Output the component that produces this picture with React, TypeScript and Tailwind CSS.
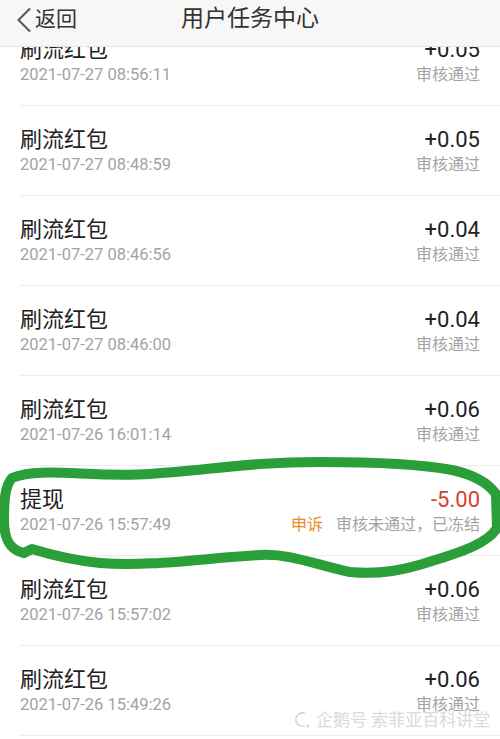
import React from 'react';

interface TaskRecord {
    title: string;
    time: string;
    amount: string;
    status: string;
    rejected?: boolean;
}

const records: TaskRecord[] = [
    { title: '刷流红包', time: '2021-07-27 08:56:11', amount: '+0.05', status: '审核通过' },
    { title: '刷流红包', time: '2021-07-27 08:48:59', amount: '+0.05', status: '审核通过' },
    { title: '刷流红包', time: '2021-07-27 08:46:56', amount: '+0.04', status: '审核通过' },
    { title: '刷流红包', time: '2021-07-27 08:46:00', amount: '+0.04', status: '审核通过' },
    { title: '刷流红包', time: '2021-07-26 16:01:14', amount: '+0.06', status: '审核通过' },
    { title: '提现', time: '2021-07-26 15:57:49', amount: '-5.00', status: '审核未通过，已冻结', rejected: true },
    { title: '刷流红包', time: '2021-07-26 15:57:02', amount: '+0.06', status: '审核通过' },
    { title: '刷流红包', time: '2021-07-26 15:49:26', amount: '+0.06', status: '审核通过' },
    { title: '刷流红包', time: '2021-07-26 15:41:10', amount: '+0.06', status: '审核通过' },
];

const font = { fontFamily: 'Roboto, "Noto Sans CJK SC", sans-serif' };

const App: React.FC = () => {
    return (
        <div className="w-[500px] h-[739px] bg-white flex flex-col overflow-hidden relative" style={font}>
            {/* 顶部导航 */}
            <div className="h-[47px] shrink-0 bg-[#f7f7f7] border-b border-[#e3e3e3] relative z-10">
                <div className="h-[39px] flex items-center relative">
                    <div className="flex items-center pl-[16px] text-[21px] text-[#333]">
                        <svg width="17" height="26" viewBox="0 0 17 26" className="mr-[2px]">
                            <path d="M14 1.5 L2.5 13 L14 24.5" fill="none" stroke="#555" strokeWidth="2" />
                        </svg>
                        <span>返回</span>
                    </div>
                    <div className="absolute left-0 right-0 text-center text-[23px] text-[#333] pointer-events-none">用户任务中心</div>
                </div>
            </div>

            {/* 列表 */}
            <div className="flex-1 overflow-hidden relative">
                <div className="mt-[-31px]">
                    {records.map((r, i) => (
                        <div key={i} className="ml-[20px] pr-[20px] h-[90px] border-b border-[#ececec] pt-[20px] flex justify-between">
                            <div>
                                <div className="text-[22px] leading-[28px] text-[#222]">{r.title}</div>
                                <div className="text-[16.5px] leading-[22px] text-[#a3a3a3]">{r.time}</div>
                            </div>
                            <div className="flex flex-col items-end">
                                <div className={`text-[22px] leading-[28px] ${r.rejected ? 'text-[#d9402c]' : 'text-[#222]'}`}>{r.amount}</div>
                                <div className="text-[16px] leading-[22px] text-[#a3a3a3] flex">
                                    {r.rejected && <span className="text-[#ee8a25] mr-[13px]">申诉</span>}
                                    <span>{r.status}</span>
                                </div>
                            </div>
                        </div>
                    ))}
                </div>
            </div>

            {/* 手绘圈 */}
            <svg className="absolute left-0 top-0 pointer-events-none" width="500" height="739" viewBox="0 0 500 739">
                <path
                    d="M12 478 C 40 466, 90 478, 150 474 C 210 470, 250 462, 320 462 C 380 462, 420 464, 452 470 C 475 475, 488 483, 496 494 L 497 528 C 488 543, 462 552, 432 561 C 405 570, 380 575, 350 572 C 320 566, 290 553, 260 555 C 205 558, 150 567, 100 563 C 70 560, 45 553, 32 549 L 24 553 C 10 550, 4 540, 4 520 C 4 500, 5 486, 12 478 Z"
                    fill="none"
                    stroke="#2a9e38"
                    strokeWidth="10"
                    strokeLinejoin="round"
                />
            </svg>

            {/* 水印 */}
            <div className="absolute left-[293px] top-[708px] flex items-center text-[17px] leading-[24px] text-[#dadada]">
                <svg width="18" height="20" viewBox="0 0 18 20" className="mr-[5px]">
                    <path d="M12 3 C 6 2, 2 6, 3 11 C 4 15, 8 17, 12 16" fill="none" stroke="#d6d6d6" strokeWidth="1.6" />
                    <circle cx="15" cy="16" r="1.5" fill="#d6d6d6" />
                </svg>
                <span>企鹅号 索菲亚百科讲堂</span>
            </div>
        </div>
    );
};

export default App;
